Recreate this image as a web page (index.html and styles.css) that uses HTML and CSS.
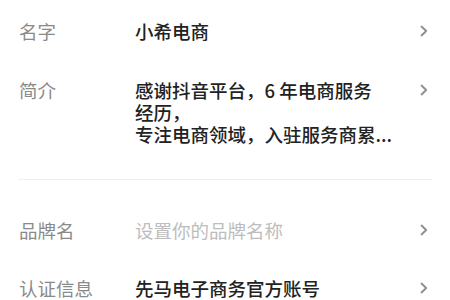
FILE: index.html
```html
<!DOCTYPE html>
<html lang="zh-CN">
<head>
<meta charset="utf-8">
<link rel="stylesheet" href="styles.css">
</head>
<body>
<div class="page">
  <div class="group group-top">
    <div class="row">
      <div class="label">名字</div>
      <div class="value">小希电商</div>
      <svg class="chev" viewBox="0 0 8 12" width="8" height="12"><path d="M1.5 1.5 L6.2 6 L1.5 10.5" fill="none" stroke="#8c8c8c" stroke-width="1.8" stroke-linecap="round" stroke-linejoin="round"/></svg>
    </div>
    <div class="row">
      <div class="label">简介</div>
      <div class="value multi">
        <div class="line">感谢抖音平台，6 年电商服务</div>
        <div class="line">经历，</div>
        <div class="line">专注电商领域，入驻服务商累...</div>
      </div>
      <svg class="chev" viewBox="0 0 8 12" width="8" height="12"><path d="M1.5 1.5 L6.2 6 L1.5 10.5" fill="none" stroke="#8c8c8c" stroke-width="1.8" stroke-linecap="round" stroke-linejoin="round"/></svg>
    </div>
  </div>
  <div class="divider"></div>
  <div class="group group-bottom">
    <div class="row">
      <div class="label">品牌名</div>
      <div class="value placeholder">设置你的品牌名称</div>
      <svg class="chev" viewBox="0 0 8 12" width="8" height="12"><path d="M1.5 1.5 L6.2 6 L1.5 10.5" fill="none" stroke="#8c8c8c" stroke-width="1.8" stroke-linecap="round" stroke-linejoin="round"/></svg>
    </div>
    <div class="row">
      <div class="label">认证信息</div>
      <div class="value">先马电子商务官方账号</div>
      <svg class="chev" viewBox="0 0 8 12" width="8" height="12"><path d="M1.5 1.5 L6.2 6 L1.5 10.5" fill="none" stroke="#8c8c8c" stroke-width="1.8" stroke-linecap="round" stroke-linejoin="round"/></svg>
    </div>
  </div>
</div>
</body>
</html>
```

FILE: styles.css
```css
html, body {
  margin: 0;
  padding: 0;
  background: #ffffff;
}
body {
  font-family: "Noto Sans CJK SC", "Noto Sans", sans-serif;
  font-size: 18.5px;
  color: #222222;
}
.page {
  width: 450px;
  height: 300px;
  overflow: hidden;
}
.group {
  display: flex;
  flex-direction: column;
}
.group-top {
  padding-top: 20px;
  gap: 37px;
}
.divider {
  height: 1px;
  background: #efefef;
  margin: 34px 18px 0 18px;
}
.group-bottom {
  padding-top: 39px;
  gap: 36px;
}
.row {
  display: flex;
  align-items: flex-start;
  padding: 0 22px 0 19px;
  line-height: 22px;
}
.label {
  width: 116px;
  flex: none;
  color: #8a8a8a;
}
.value {
  flex: 1;
  font-weight: 500;
  color: #222222;
  white-space: nowrap;
}
.multi .line {
  line-height: 22px;
}
.placeholder {
  font-weight: 400;
  color: #bdbdbd;
}
.chev {
  flex: none;
  margin-top: 5px;
}
```
